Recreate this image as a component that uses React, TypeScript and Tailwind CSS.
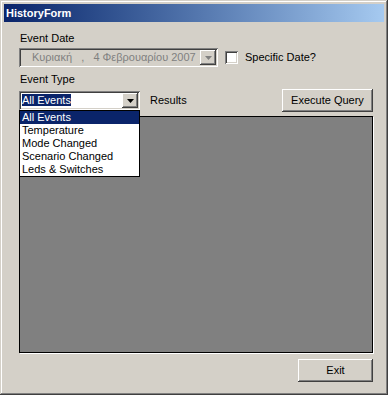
import React from 'react'

const raised =
  'shadow-[inset_-1px_-1px_#404040,inset_1px_1px_#ffffff,inset_-2px_-2px_#808080,inset_2px_2px_#d4d0c8]'
const sunken =
  'shadow-[inset_1px_1px_#808080,inset_-1px_-1px_#ffffff,inset_2px_2px_#404040,inset_-2px_-2px_#d4d0c8]'

function Arrow({ color }: { color: string }) {
  return (
    <svg width="7" height="4" viewBox="0 0 7 4" aria-hidden="true">
      <path d="M0 0h7L3.5 4z" fill={color} />
    </svg>
  )
}

const eventTypes = ['All Events', 'Temperature', 'Mode Changed', 'Scenario Changed', 'Leds & Switches']

export default function App() {
  return (
    <div
      className="relative flex h-[395px] w-[388px] flex-col bg-[#d4d0c8] p-[4px] text-[11px] leading-[13px] text-black shadow-[inset_-1px_-1px_#404040,inset_1px_1px_#d4d0c8,inset_-2px_-2px_#808080,inset_2px_2px_#ffffff]"
      style={{ fontFamily: '"Liberation Sans", Arial, sans-serif' }}
    >
      {/* title bar */}
      <div className="flex h-[18px] items-center bg-gradient-to-r from-[#0a246a] to-[#a6caf0] pl-[2px] text-[11px] font-bold text-white">
        HistoryForm
      </div>

      <div className="flex flex-1 flex-col pl-[15px] pr-[11px]">
        <div className="mt-[10px] pl-[1px]">Event Date</div>

        {/* date row */}
        <div className="mt-[3px] flex items-center">
          <div className={`flex h-[19px] w-[199px] items-center bg-[#d4d0c8] pl-[13px] pr-[2px] ${sunken}`}>
            <span className="flex-1 whitespace-pre text-[#808080]">Κυριακή   ,   4 Φεβρουαρίου 2007</span>
            <div className={`flex h-[15px] w-[16px] items-center justify-center ${raised}`}>
              <Arrow color="#808080" />
            </div>
          </div>
          <div className={`ml-[7px] h-[13px] w-[13px] bg-white ${sunken}`} />
          <span className="ml-[7px]">Specific Date?</span>
        </div>

        <div className="mt-[6px] pl-[1px]">Event Type</div>

        {/* combo row */}
        <div className="relative mt-[3px] flex items-center">
          <div className={`flex h-[19px] w-[121px] items-center bg-white pl-[3px] pr-[2px] ${sunken}`}>
            <span className="flex-1">
              <span className="bg-[#0a246a] text-white">All Events</span>
            </span>
            <div className={`flex h-[15px] w-[16px] items-center justify-center bg-[#d4d0c8] ${raised}`}>
              <Arrow color="#000000" />
            </div>
          </div>
          <span className="ml-[10px]">Results</span>
          <button className={`ml-auto h-[23px] w-[91px] bg-[#d4d0c8] ${raised}`}>Execute Query</button>

          {/* open dropdown list */}
          <ul className="absolute left-0 top-[21px] z-10 w-[121px] border border-black bg-white">
            {eventTypes.map((t, i) => (
              <li
                key={t}
                className={`h-[13px] pl-[2px] leading-[13px] ${i === 0 ? 'bg-[#0a246a] text-white' : ''}`}
              >
                {t}
              </li>
            ))}
          </ul>
        </div>

        {/* results panel */}
        <div className="mt-[4px] h-[237px] border border-black bg-[#808080] shadow-[1px_1px_0_#ffffff]" />

        <div className="mt-[6px] flex justify-end">
          <button className={`h-[23px] w-[75px] bg-[#d4d0c8] ${raised}`}>Exit</button>
        </div>
      </div>
    </div>
  )
}
